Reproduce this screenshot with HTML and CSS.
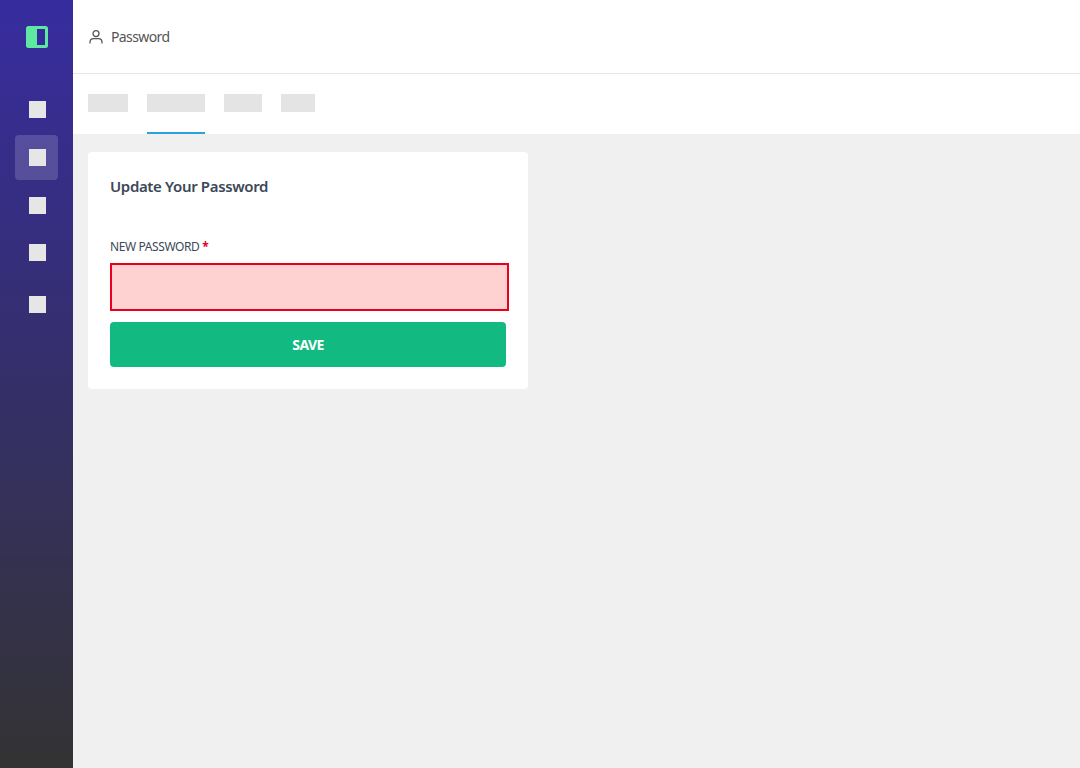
FILE: index.html
```html
<!DOCTYPE html>
<html lang="en">
<head>
    <meta charset="UTF-8">
    <meta name="viewport" content="width=device-width, initial-scale=1.0">
    <title>Password</title>
    <link rel="stylesheet" href="styles.css">
</head>
<body>
    <div class="sidebar">
        <div class="logo">
            <svg width="22" height="22" viewBox="0 0 22 22">
                <rect x="0" y="0" width="22" height="22" rx="2.5" fill="#5fe8a2"/>
                <rect x="11" y="3" width="8" height="16" fill="#352c9c"/>
            </svg>
        </div>
        <ul class="side-nav">
            <li class="side-item"><span class="side-icon"></span></li>
            <li class="side-item active"><span class="side-icon"></span></li>
            <li class="side-item"><span class="side-icon"></span></li>
            <li class="side-item"><span class="side-icon"></span></li>
            <li class="side-item last"><span class="side-icon"></span></li>
        </ul>
    </div>

    <div class="main">
        <div class="topbar">
            <svg class="user-icon" width="14" height="16" viewBox="0 0 14 16" fill="none" stroke="#555" stroke-width="1.3">
                <circle cx="7" cy="4.6" r="3"/>
                <path d="M1 14.6v-1.4c0-2.2 1.6-3.6 3.6-3.6h4.8c2 0 3.6 1.4 3.6 3.6v1.4"/>
            </svg>
            <span class="page-name">Password</span>
        </div>

        <div class="tabs">
            <div class="tab"><span class="tab-label w40"></span></div>
            <div class="tab active"><span class="tab-label w58"></span></div>
            <div class="tab"><span class="tab-label w38"></span></div>
            <div class="tab"><span class="tab-label w34"></span></div>
        </div>

        <div class="content">
            <form class="card">
                <h2>Update Your Password</h2>
                <label for="password">New Password <span class="required">*</span></label>
                <input type="password" id="password" class="field-error">
                <button type="button" class="save-btn">Save</button>
            </form>
        </div>
    </div>
</body>
</html>
```

FILE: styles.css
```css
body {
    font-family: "Noto Sans", Arial, sans-serif;
    margin: 0;
    padding: 0;
    display: flex;
    height: 100vh;
    overflow: hidden;
    background-color: #f0f0f0;
}

.sidebar {
    width: 73px;
    flex-shrink: 0;
    background: linear-gradient(180deg, #372c9f, #333333);
}

.logo {
    display: flex;
    justify-content: center;
    padding-top: 26px;
    height: 22px;
    margin-bottom: 38px;
}

.logo svg {
    display: block;
}

.side-nav {
    list-style: none;
    margin: 0;
    padding: 0;
    display: flex;
    flex-direction: column;
    align-items: center;
}

.side-item {
    width: 43px;
    height: 47px;
    border-radius: 4px;
    display: flex;
    justify-content: center;
    align-items: center;
}

.side-item.active {
    height: 45px;
    margin: 2px 0;
    background-color: rgba(255, 255, 255, 0.16);
}

.side-item.last {
    margin-top: 5px;
}

.side-icon {
    display: block;
    width: 17px;
    height: 17px;
    margin-left: 2px;
    background-color: #e6e6e6;
}

.main {
    flex: 1;
    min-width: 0;
    display: flex;
    flex-direction: column;
}

.topbar {
    height: 74px;
    box-sizing: border-box;
    background-color: #fff;
    border-bottom: 1px solid #e6e6e6;
    display: flex;
    align-items: center;
    padding-left: 16px;
}

.user-icon {
    margin-right: 8px;
}

.page-name {
    font-size: 14px;
    letter-spacing: -0.6px;
    padding-bottom: 1px;
    color: #555;
}

.tabs {
    height: 60px;
    background-color: #fff;
    display: flex;
    gap: 19px;
    padding-left: 15px;
}

.tab {
    height: 60px;
    box-sizing: border-box;
    padding-top: 20px;
}

.tab.active {
    border-bottom: 2px solid #2aa4e0;
}

.tab-label {
    display: block;
    height: 18px;
    background-color: #e4e4e4;
}

.w40 { width: 40px; }
.w58 { width: 58px; }
.w38 { width: 38px; }
.w34 { width: 34px; }

.content {
    flex: 1;
    padding: 18px 15px;
}

.card {
    width: 440px;
    box-sizing: border-box;
    background-color: #fff;
    border-radius: 4px;
    padding: 22px;
}

.card h2 {
    margin: 0 0 41px 0;
    font-size: 15px;
    line-height: 24px;
    font-weight: 600;
    letter-spacing: -0.35px;
    color: #3c4858;
}

.card label {
    display: block;
    font-size: 12px;
    line-height: 16px;
    letter-spacing: -0.4px;
    color: #3c4858;
    text-transform: uppercase;
    margin-bottom: 8px;
}

.required {
    color: #e8001c;
    font-weight: 700;
}

.card input {
    display: block;
    width: 399px;
    height: 48px;
    padding: 0 12px;
    box-sizing: border-box;
    border: 2px solid #e8001c;
    background-color: #ffd2d2;
    outline: none;
    margin-bottom: 11px;
}

.save-btn {
    display: block;
    width: 100%;
    height: 45px;
    padding-bottom: 2px;
    border: none;
    border-radius: 4px;
    background-color: #12b981;
    color: #fff;
    font-family: inherit;
    font-size: 14px;
    font-weight: 700;
    letter-spacing: -0.6px;
    text-transform: uppercase;
    cursor: pointer;
}
```
